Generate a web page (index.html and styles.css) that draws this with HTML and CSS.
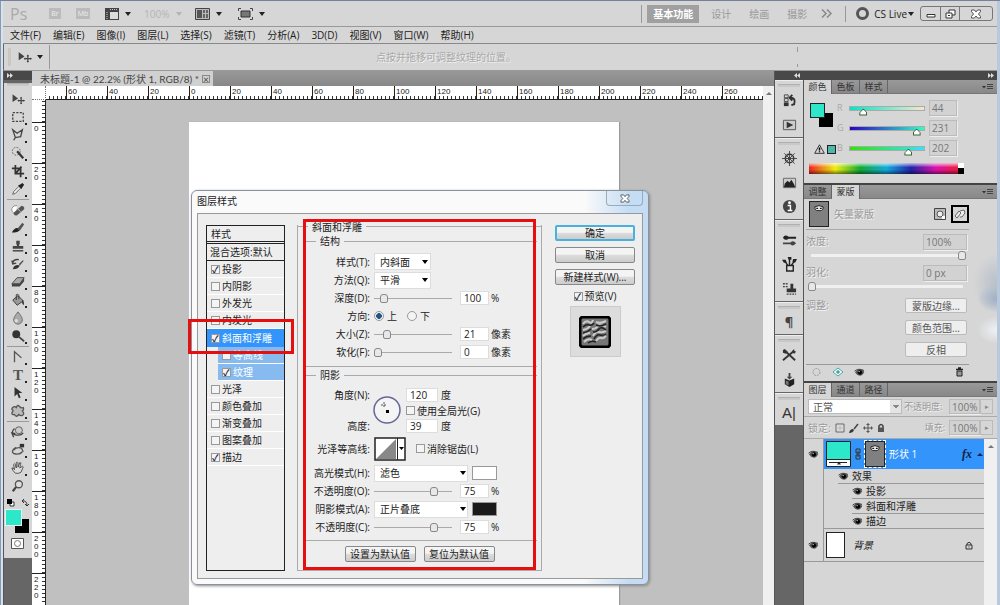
FILE: index.html
```
<!DOCTYPE html>
<html lang="zh-CN">
<head>
  <meta charset="UTF-8">
  <meta name="viewport" content="width=device-width, initial-scale=1.0">
  <title>未标题-1 - 图层样式</title>
  <link rel="stylesheet" href="styles.css">
</head>
<body>
<svg class="defs" aria-hidden="true">
  <symbol id="eye" viewBox="0 0 12 10">
    <path d="M1 5Q3 1.500 6.500 1.700Q10 2 11.300 4.500Q9.500 8.600 6.500 8.600Q3.500 8.600 1 5z" fill="#555"/>
    <circle cx="6.500" cy="5" r="2.400" fill="#000"/><circle cx="5.600" cy="4" r=".8" fill="#ddd"/>
    <path d="M.5 3.500Q5-.3 11 2.800" stroke="#333" fill="none"/>
  </symbol>
  <symbol id="move" viewBox="0 0 18 14">
    <path d="M2 1v10l7-4.500z" fill="#444"/>
    <path d="M13 5v8M9 9h8" stroke="#444" stroke-width="1.500"/>
    <path d="M11.500 6L13 4l1.500 2zM11.500 12l1.500 2 1.500-2zM10 7.500L8 9l2 1.500zM16 7.500L18 9l-2 1.500z" fill="#444"/>
  </symbol>
  <symbol id="close" viewBox="0 0 12 10">
    <path d="M1.500 1h3L6 3l1.500-2h3v1.500L8.500 5l2 2.500V9h-3L6 7 4.500 9h-3V7.500l2-2.500-2-2.500z" fill="#fff" stroke="#555"/>
  </symbol>
  <symbol id="menuicon" viewBox="0 0 12 8">
    <path d="M0 3h4L2 5.500z" fill="#333"/><path d="M5 1.500h6M5 3.500h6M5 5.500h6" stroke="#444"/>
  </symbol>
  <symbol id="facemask" viewBox="0 0 20 26">
    <path d="M5.500 5Q10 2.500 14.500 5Q15 9 11 9.500L10 8.500 9 9.500Q5 9 5.500 5z" fill="#eee" stroke="#111"/>
    <path d="M7 6h2v1.500H7zM11 6h2v1.500h-2z" fill="#111"/>
  </symbol>
</svg>

<div class="app">
  <header class="appbar">
    <span class="ps">Ps</span>
    <span class="badge">Br</span>
    <span class="badge mb">Mb</span>
    <button class="viewbtn extras" aria-label="查看额外内容">
      <svg width="14" height="12" viewBox="0 0 14 12"><path d="M0 0h14v12H0z" fill="#444"/><path d="M5 4h8v7H5z" fill="#ddd"/><path d="M5 1.500h8M2 4v7" stroke="#ccc" stroke-dasharray="1 1"/></svg>
      <i class="tri"></i>
    </button>
    <button class="viewbtn zoomlevel">100% <i class="tri"></i></button>
    <button class="viewbtn" aria-label="排列文档">
      <svg width="15" height="12" viewBox="0 0 15 12"><path d="M.5.5h14v11H.5z" fill="#bbb" stroke="#444"/><path d="M2 2h5v8H2z" fill="#555"/><path d="M8 2h2v3H8zM11 2h2v3h-2zM8 6h2v4H8zM11 6h2v4h-2z" fill="#666"/></svg>
      <i class="tri"></i>
    </button>
    <button class="viewbtn" aria-label="屏幕模式">
      <svg width="15" height="12" viewBox="0 0 15 12"><path d="M3 3h9v6H3z" fill="#777" stroke="#333"/><path d="M.5 3V.5H3M12 .5h2.500V3M.5 9v2.500H3M12 11.500h2.500V9" fill="none" stroke="#444"/></svg>
      <i class="tri"></i>
    </button>
    <nav class="workspaces">
      <button class="ws active">基本功能</button>
      <button class="ws">设计</button>
      <button class="ws">绘画</button>
      <button class="ws">摄影</button>
      <button class="more" aria-label="更多">
        <svg width="12" height="9" viewBox="0 0 12 9"><path d="M1 .5l4 4-4 4M6 .5l4 4-4 4" fill="none" stroke="#888" stroke-width="1.500"/></svg>
      </button>
    </nav>
    <button class="cslive"><i class="ring"></i>CS Live<i class="tri"></i></button>
    <div class="winbtns">
      <button aria-label="最小化"><svg width="10" height="8" viewBox="0 0 10 8"><path d="M1 4.500h8v2.500H1z" fill="#fff" stroke="#333"/></svg></button>
      <button aria-label="还原"><svg width="11" height="10" viewBox="0 0 11 10"><path d="M4 1h6v5H4z" fill="#fff" stroke="#333"/><path d="M1 4h6v5H1z" fill="#fff" stroke="#333"/><path d="M3 6.500h2" stroke="#333"/></svg></button>
      <button class="wide" aria-label="关闭"><svg width="12" height="10"><use href="#close"/></svg></button>
    </div>
  </header>

  <nav class="menubar">
    <a href="#">文件(F)</a><a href="#">编辑(E)</a><a href="#">图像(I)</a><a href="#">图层(L)</a><a href="#">选择(S)</a><a href="#">滤镜(T)</a><a href="#">分析(A)</a><a href="#">3D(D)</a><a href="#">视图(V)</a><a href="#">窗口(W)</a><a href="#">帮助(H)</a>
  </nav>

  <div class="options">
    <i class="vgrip"></i>
    <button class="tool-preset" aria-label="移动工具"><svg width="15" height="12"><use href="#move"/></svg><i class="tri"></i></button>
    <span class="hint">点按并拖移可调整纹理的位置。</span>
    <i class="endgrip"></i>
  </div>

  <div class="workspace">
    <aside class="tools">
      <div class="darkbar"><svg width="6" height="5" viewBox="0 0 6 5"><path d="M0 0l3 2.500L0 5zM3 0l3 2.500L3 5z" fill="#ddd"/></svg></div>
      <div class="toolbox">
        <i class="grip"></i>
        <button class="tool" aria-label="移动"><svg viewBox="0 0 18 14"><use href="#move"/></svg></button>
        <button class="tool sub" aria-label="选框"><svg viewBox="0 0 16 16"><path d="M2 3h12v10H2z" fill="none" stroke="#444" stroke-width="1.500" stroke-dasharray="2.500 1.500"/></svg></button>
        <button class="tool sub" aria-label="套索"><svg viewBox="0 0 16 16"><path d="M2 2l5 4 6-4-2 8-6 1zM5 11l-2 3" fill="none" stroke="#444" stroke-width="1.500"/></svg></button>
        <button class="tool sub" aria-label="快速选择"><svg viewBox="0 0 16 16"><circle cx="6" cy="6" r="4.500" fill="none" stroke="#555" stroke-dasharray="2 1.500"/><path d="M7 6l7 8" stroke="#333" stroke-width="2.500"/></svg></button>
        <button class="tool sub" aria-label="裁剪"><svg viewBox="0 0 16 16"><path d="M5 1v10h10M1 5h10v10M5 11l7-8" fill="none" stroke="#333" stroke-width="2"/></svg></button>
        <button class="tool sub" aria-label="吸管"><svg viewBox="0 0 16 16"><path d="M2 14l1-3 6-6 2 2-6 6z" fill="#eee" stroke="#555"/><path d="M8 4l2-1 3-2 2 2-2 3-1 2z" fill="#222"/></svg></button>
        <hr>
        <button class="tool sub" aria-label="修复画笔"><svg viewBox="0 0 16 16"><path d="M5 12Q0 11 1 6Q3 2 7 3" fill="#fff" stroke="#888"/><path d="M3 11L12 3q4 1 3 4L7 14q-4 1-4-3z" fill="#555"/><path d="M8 7l3 3" stroke="#ccc"/></svg></button>
        <button class="tool sub" aria-label="画笔"><svg viewBox="0 0 16 16"><path d="M1 13q3-6 7-5l2 2q-2 4-9 3z" fill="#222"/><path d="M7 9l6-7 2 2-5 7z" fill="#555"/></svg></button>
        <button class="tool sub" aria-label="图章"><svg viewBox="0 0 16 16"><path d="M6 2h4v3L9 8h5v3H2V8h5L6 5z" fill="#444"/><path d="M2 13.500h12" stroke="#333" stroke-width="1.500"/></svg></button>
        <button class="tool sub" aria-label="历史记录画笔"><svg viewBox="0 0 16 16"><path d="M2 14q1-5 6-5l2 1q-2 4-8 4z" fill="#333"/><path d="M9 8l5-5v2l-4 5z" fill="#555"/><path d="M2 7q1-5 7-4M1 4l1 4 4-1" fill="none" stroke="#444" stroke-width="1.500"/></svg></button>
        <button class="tool sub" aria-label="橡皮擦"><svg viewBox="0 0 16 16"><path d="M1 10l6-7h8l-5 7z" fill="#aaa" stroke="#444"/><path d="M1 10h9l5-7v4l-5 6H1z" fill="#444"/></svg></button>
        <button class="tool sub" aria-label="油漆桶"><svg viewBox="0 0 16 16"><path d="M2 8l6-5 6 6-7 5z" fill="#999" stroke="#333"/><path d="M6 8V2q2-2 3 1v4" fill="none" stroke="#333"/><path d="M13 8q3 3 1 6-2-2-1-6z" fill="#222"/></svg></button>
        <button class="tool sub" aria-label="模糊"><svg viewBox="0 0 16 16"><path d="M8 1q5 6 5 9a5 5 0 0 1-10 0Q3 7 8 1z" fill="#aaa" stroke="#666"/><circle cx="6" cy="11" r="2" fill="#ddd"/></svg></button>
        <button class="tool sub" aria-label="减淡"><svg viewBox="0 0 16 16"><circle cx="6" cy="6" r="4.500" fill="#333"/><path d="M9 9l6 5" stroke="#444" stroke-width="2"/></svg></button>
        <hr>
        <button class="tool sub" aria-label="钢笔"><svg viewBox="0 0 16 16"><path d="M4 14V2l8 7" fill="none" stroke="#555" stroke-width="1.500"/></svg></button>
        <button class="tool sub type" aria-label="文字">T</button>
        <button class="tool sub" aria-label="路径选择"><svg viewBox="0 0 16 16"><path d="M4 1v11l3-3 2 5 2-1-2-5h4z" fill="#333"/></svg></button>
        <button class="tool sub" aria-label="自定形状"><svg viewBox="0 0 16 16"><path d="M2 4q2-2 4 0 1-4 4-1 1 2 4 1 1 3-1 4 3 3 0 5-2 1-4-1-3 4-5 0-3 1-3-2 2-2 1-3-2-1 0-3z" fill="#bbb" stroke="#555" stroke-width="1.500"/></svg></button>
        <hr>
        <button class="tool sub" aria-label="3D 旋转"><svg viewBox="0 0 16 16"><circle cx="9" cy="6" r="4" fill="#ccc" stroke="#555"/><path d="M4 4q-5 5 0 7 7 2 10-2M3 14l-2-5 4 1" fill="none" stroke="#444" stroke-width="1.500"/></svg></button>
        <button class="tool sub" aria-label="3D 相机"><svg viewBox="0 0 16 16"><path d="M6 5q-7 4-3 7 7 2 10-2M3 8q4-4 9-2l2 4" fill="none" stroke="#555" stroke-width="1.500"/><path d="M10 1h5v4h-5z" fill="#333"/></svg></button>
        <button class="tool sub" aria-label="抓手"><svg viewBox="0 0 16 16"><path d="M5 14Q1 10 1 8q2-1 3 2L3 4q1-2 2 0l1 4V2q1-2 2 0v5l2-5q2-1 1 2l-1 4 3-2q2 0 0 3-1 5-4 5z" fill="#ddd" stroke="#444"/></svg></button>
        <button class="tool" aria-label="缩放"><svg viewBox="0 0 16 16"><circle cx="9" cy="6" r="4" fill="#ddd" stroke="#555" stroke-width="1.500"/><path d="M6 9l-4 5" stroke="#444" stroke-width="2.500"/></svg></button>
        <div class="swaprow">
          <svg width="8" height="8" viewBox="0 0 8 8"><path d="M3 3h4v4H3z" fill="#fff" stroke="#333"/><path d="M0 0h5v5H0z" fill="#000"/></svg>
          <svg width="8" height="8" viewBox="0 0 8 8"><path d="M1 2q5-1 5 5M3 0L1 2l2 2M4 5l2 2 2-2" fill="none" stroke="#333"/></svg>
        </div>
        <div class="fgbg"><button class="fg" aria-label="前景色"></button><i class="bg"></i></div>
        <button class="quickmask" aria-label="快速蒙版"><svg width="13" height="11" viewBox="0 0 13 11"><path d="M.5.5h12v10H.5z" fill="#fff" stroke="#555"/><circle cx="6.500" cy="5.500" r="3" fill="#fff" stroke="#777"/></svg></button>
      </div>
    </aside>

    <main class="document">
      <div class="doctabs"><span class="doctab">未标题-1 @ 22.2% (形状 1, RGB/8) * <button aria-label="关闭文档">×</button></span></div>
      <div class="docgrid">
        <div class="corner"></div>
        <div class="ruler-h"><span></span><span>60</span><span>40</span><span>20</span><span>0</span><span>20</span><span>40</span><span>60</span><span>80</span><span>100</span><span>120</span><span>140</span><span>160</span><span>180</span><span>200</span><span>220</span><span>240</span><span>260</span></div>
        <div class="scroll"><i class="uptri"></i></div>
        <div class="ruler-v"><span></span><span>0</span><span>20</span><span>40</span><span>60</span><span>80</span><span>100</span><span>120</span><span>140</span><span>160</span><span>180</span><span>200</span><span>220</span></div>
        <div class="canvas"><div class="sheet"></div></div>
      </div>
    </main>

    <div class="right">
      <div class="darkbar docks">
        <svg width="6" height="5" viewBox="0 0 6 5"><path d="M3 0L0 2.500 3 5zM6 0L3 2.500 6 5z" fill="#ddd"/></svg>
        <svg width="6" height="5" viewBox="0 0 6 5"><path d="M0 0l3 2.500L0 5zM3 0l3 2.500L3 5z" fill="#ddd"/></svg>
      </div>
      <div class="rightcols">
        <aside class="dock">
          <div class="group">
            <i class="grip"></i>
            <button aria-label="历史记录"><svg viewBox="0 0 16 16"><path d="M2.500 2h4v3h-4zM2.500 6h4v3h-4z" fill="#ddd" stroke="#444"/><path d="M2 10h5v4H2z" fill="#333"/><path d="M9 5q6 0 4 7l-3 1M11 2L8 5l3 3" fill="none" stroke="#333" stroke-width="2"/></svg></button>
            <button aria-label="动作"><svg viewBox="0 0 16 16"><path d="M1.500 3.500h13v10h-13z" fill="#ccc" stroke="#555"/><path d="M5 5v7l7-3.500z" fill="#333"/></svg></button>
          </div>
          <div class="group">
            <i class="grip"></i>
            <button aria-label="导航器"><svg viewBox="0 0 16 16"><circle cx="8" cy="8" r="4.500" fill="none" stroke="#333" stroke-width="1.500"/><circle cx="8" cy="8" r="1.800" fill="#333"/><path d="M8 0v16M0 8h16M2.500 2.500l11 11M13.500 2.500l-11 11" stroke="#444"/></svg></button>
            <button aria-label="直方图"><svg viewBox="0 0 16 16"><path d="M1.500 3.500h13v10h-13z" fill="#ccc" stroke="#666"/><path d="M2 13l1-4 3-3 2 2 2-3 3 5 1 3z" fill="#222"/></svg></button>
            <button aria-label="信息"><svg viewBox="0 0 16 16"><circle cx="8" cy="8" r="7" fill="#444"/><circle cx="8" cy="4" r="1.500" fill="#fff"/><path d="M6 7h3v5M6 12.300h5" stroke="#fff" stroke-width="1.500" fill="none"/></svg></button>
          </div>
          <div class="group">
            <i class="grip"></i>
            <button aria-label="画笔"><svg viewBox="0 0 16 16"><path d="M1 5q2-4 6-1h8v2H7q-4 3-6-1z" fill="#222"/><path d="M1 10h8q3-3 6 1-3 4-6 1H1z" fill="#444"/></svg></button>
            <button aria-label="画笔预设"><svg viewBox="0 0 16 16"><path d="M5 9h7v6H5z" fill="#ddd" stroke="#222" stroke-width="1.500"/><path d="M6 9L3 4M8 9V2M10 9l4-6" stroke="#222" stroke-width="1.500"/><path d="M0 3l4 0 1 3-3 0zM6 0h4v3H7zM11 5l1-3 4 0-2 4z" fill="#222"/></svg></button>
            <button aria-label="仿制源"><svg viewBox="0 0 16 16"><path d="M9 3h3v5h3v4H5V8h4z" fill="#333"/><path d="M5 14h10M1 3h6M1 6h5" stroke="#444" stroke-width="1.500" stroke-dasharray="2 1"/></svg></button>
          </div>
          <div class="group single">
            <i class="grip"></i>
            <button class="glyph" aria-label="段落">¶</button>
          </div>
          <div class="group">
            <i class="grip"></i>
            <button aria-label="工具预设"><svg viewBox="0 0 16 16"><path d="M1 13L13 3M3 3l11 10" stroke="#333" stroke-width="2"/><path d="M1 2l2-1 3 3-2 2-3-1zM11 3l2-2v2l2 1-2 2-2-1z" fill="#333"/></svg></button>
            <button aria-label="3D"><svg viewBox="0 0 16 16"><path d="M3 7l5 2 5-2v6l-5 3-5-3z" fill="#222"/><path d="M7 1h2v4h2L8 8 5 5h2z" fill="#444"/><path d="M4 9l3 1v4l-3-1z" fill="#777"/></svg></button>
          </div>
          <div class="group single">
            <i class="grip"></i>
            <button class="glyph char" aria-label="字符">A|</button>
          </div>
        </aside>

        <div class="panels">
          <section class="panel color">
            <div class="tabs"><button class="on">颜色</button><button>色板</button><button>样式</button><svg width="12" height="8"><use href="#menuicon"/></svg></div>
            <div class="colorbody">
              <div class="swatchcol">
                <div class="fgbg"><button class="fg" aria-label="前景色"></button><i class="bg"></i></div>
                <div class="warn">
                  <svg width="11" height="10" viewBox="0 0 11 10"><path d="M5.500.8L10.300 9.300H.7z" fill="#ddd" stroke="#333"/><path d="M5.500 3.500v3M5.500 7.300v1" stroke="#000" stroke-width="1.500"/></svg>
                  <i></i>
                </div>
              </div>
              <div class="channels">
                <label for="cr">R</label><div class="ch r"><i style="left:18%"></i></div><input id="cr" value="44">
                <label for="cg">G</label><div class="ch g"><i style="left:90%"></i></div><input id="cg" value="231">
                <label for="cb">B</label><div class="ch b"><i style="left:79%"></i></div><input id="cb" value="202">
              </div>
            </div>
            <div class="spectrum"><i></i></div>
          </section>

          <section class="panel masks">
            <div class="tabs"><button>调整</button><button class="on">蒙版</button><svg width="12" height="8"><use href="#menuicon"/></svg></div>
            <div class="maskhead">
              <svg class="maskthumb" width="20" height="26"><use href="#facemask"/></svg>
              <span class="emboss">矢量蒙版</span>
              <button aria-label="像素蒙版"><svg width="12" height="12" viewBox="0 0 12 12"><path d="M.5.5h11v11H.5z" fill="#bbb" stroke="#444"/><circle cx="6" cy="6" r="3" fill="#eee" stroke="#555"/><path d="M8 8h3v3H8z" fill="#fff"/></svg></button>
              <button class="boxed" aria-label="矢量蒙版"><svg width="12" height="12" viewBox="0 0 12 12"><path d="M1 8l4-5 2 2-4 5zM6 3l4-1 1 3-3 4-2 0" fill="#eee" stroke="#666"/></svg></button>
            </div>
            <div class="maskrow"><label class="emboss" for="dens">浓度:</label><input id="dens" value="100%"></div>
            <input class="bar" type="range" value="100" aria-label="浓度">
            <div class="maskrow"><label class="emboss" for="feat">羽化:</label><input id="feat" value="0 px"></div>
            <input class="bar" type="range" value="0" aria-label="羽化">
            <div class="refine">
              <span class="emboss">调整:</span>
              <div><button>蒙版边缘...</button><button>颜色范围...</button><button>反相</button></div>
            </div>
            <div class="maskfoot">
              <svg width="11" height="10" viewBox="0 0 11 10"><circle cx="5.500" cy="5" r="3.500" fill="none" stroke="#999" stroke-dasharray="2 1"/></svg>
              <svg width="12" height="10" viewBox="0 0 12 10"><path d="M1 5l5-4 5 4-5 4z" fill="#eff" stroke="#4aa"/><path d="M6 3v4M4 5h4" stroke="#377"/></svg>
              <svg width="11" height="9"><use href="#eye"/></svg>
              <svg class="trash" width="9" height="10" viewBox="0 0 9 10"><path d="M1 2.500h7M3 1h3" stroke="#222" stroke-width="1.500"/><path d="M2 4h5v5H2z" fill="#999" stroke="#222"/></svg>
            </div>
          </section>

          <section class="panel layers">
            <div class="tabs"><button class="on">图层</button><button>通道</button><button>路径</button><svg width="12" height="8"><use href="#menuicon"/></svg></div>
            <div class="layeropts">
              <select aria-label="混合模式"><option>正常</option></select>
              <label class="emboss" for="opac">不透明度:</label><input id="opac" value="100%"><button aria-label="不透明度滑块">▸</button>
            </div>
            <div class="layeropts locks">
              <span class="emboss">锁定:</span>
              <svg width="10" height="10" viewBox="0 0 10 10"><path d="M1 1h8v8H1z" fill="#ddd" stroke="#666"/><path d="M5 1v8M1 5h8" stroke="#bbb"/></svg>
              <svg width="10" height="10" viewBox="0 0 10 10"><path d="M0 10q1-4 4-4l1 1q-1 3-5 3z" fill="#333"/><path d="M5 6l4-5" stroke="#444" stroke-width="1.500"/></svg>
              <svg width="10" height="10" viewBox="0 0 10 10"><path d="M5 0v10M0 5h10M3.500 1.500h3M3.500 8.500h3M1.500 3.500v3M8.500 3.500v3" stroke="#555"/></svg>
              <svg width="8" height="10" viewBox="0 0 8 10"><path d="M2 5V3q2-3 4 0v2" fill="none" stroke="#444" stroke-width="1.500"/><path d="M1 4.500h6V9H1z" fill="#555"/></svg>
              <label class="emboss fill" for="fillv">填充:</label><input id="fillv" value="100%"><button aria-label="填充滑块">▸</button>
            </div>
            <div class="layerwrap">
              <div class="layerlist">
                <div class="layer selected">
                  <button class="vis boxed" aria-label="可见"><svg width="11" height="9"><use href="#eye"/></svg></button>
                  <div class="layermain">
                    <svg width="25" height="26" viewBox="0 0 25 26"><path d="M.5.5h24v25H.5z" fill="#fff" stroke="#222"/><path d="M1 1h23v17H1z" fill="#2ce7ca"/><path d="M1 18.500h23M3 21.500h18" stroke="#222"/><path d="M11 23.500l2-3 2 3z" fill="#222"/></svg>
                    <svg width="6" height="12" viewBox="0 0 6 12"><path d="M1 1h4v4H1zM1 7h4v4H1zM3 3v6" fill="none" stroke="#333"/></svg>
                    <svg class="vthumb" width="20" height="26"><use href="#facemask"/></svg>
                    <span>形状 1</span>
                    <em class="fx">fx</em><i class="uptri"></i>
                  </div>
                </div>
                <div class="effects">
                  <div class="fxrow top"><svg width="11" height="9"><use href="#eye"/></svg>效果</div>
                  <div class="fxrow"><svg width="11" height="9"><use href="#eye"/></svg>投影</div>
                  <div class="fxrow"><svg width="11" height="9"><use href="#eye"/></svg>斜面和浮雕</div>
                  <div class="fxrow last"><svg width="11" height="9"><use href="#eye"/></svg>描边</div>
                </div>
                <div class="layer back">
                  <button class="vis boxed" aria-label="可见"><svg width="11" height="9"><use href="#eye"/></svg></button>
                  <div class="layermain">
                    <i class="bgthumb"></i>
                    <em class="bgname">背景</em>
                    <svg class="lock" width="8" height="9" viewBox="0 0 8 9"><path d="M2 4V2.500q2-2.500 4 0V4M1 4h6v4H1zM4 5.500v1" fill="none" stroke="#333"/></svg>
                  </div>
                </div>
              </div>
              <div class="scroll"><i class="uptri"></i></div>
            </div>
          </section>
        </div>
      </div>
    </div>
  </div>

  <div class="dialog" role="dialog" aria-label="图层样式">
    <div class="dlgtitle"><span>图层样式</span><button aria-label="关闭"><svg width="12" height="9"><use href="#close"/></svg></button></div>
    <div class="dlgbody">
      <div class="stylelist">
        <div class="listhead">样式</div>
        <div class="listblend">混合选项:默认</div>
        <label><input type="checkbox" checked>投影</label>
        <label><input type="checkbox">内阴影</label>
        <label><input type="checkbox">外发光</label>
        <label><input type="checkbox">内发光</label>
        <label class="current"><input type="checkbox" checked>斜面和浮雕</label>
        <label class="child"><input type="checkbox">等高线</label>
        <label class="child"><input type="checkbox" checked>纹理</label>
        <label><input type="checkbox">光泽</label>
        <label><input type="checkbox">颜色叠加</label>
        <label><input type="checkbox">渐变叠加</label>
        <label><input type="checkbox">图案叠加</label>
        <label><input type="checkbox" checked>描边</label>
      </div>

      <div class="bevel">
        <div class="legend outer">斜面和浮雕</div>
        <div class="section structure">
          <div class="legend">结构</div>
          <div class="row tall"><label for="st">样式(T):</label><select id="st"><option>内斜面</option></select></div>
          <div class="row"><label for="me">方法(Q):</label><select id="me"><option>平滑</option></select></div>
          <div class="row"><label for="de">深度(D):</label><input type="range" value="9" aria-label="深度"><input class="num" id="de" value="100"><span>%</span></div>
          <div class="row radios"><span class="lab">方向:</span><label><input type="radio" name="dir" checked>上</label><label><input type="radio" name="dir">下</label></div>
          <div class="row"><label for="si">大小(Z):</label><input type="range" value="13" aria-label="大小"><input class="num" id="si" value="21"><span>像素</span></div>
          <div class="row"><label for="so">软化(F):</label><input type="range" value="0" aria-label="软化"><input class="num" id="so" value="0"><span>像素</span></div>
        </div>
        <div class="section shading">
          <div class="legend">阴影</div>
          <div class="angle">
            <div class="anglelabels"><label for="an">角度(N):</label><label for="al">高度:</label></div>
            <svg width="28" height="28" viewBox="0 0 28 28"><circle cx="14" cy="14" r="13" fill="#f4f4f4" stroke="#669" stroke-width="1.500"/><path d="M11 6v6M8 9h6" stroke="#555" stroke-dasharray="2 1"/><path d="M13 14h3v3h-3z" fill="#000"/></svg>
            <div class="anglevals">
              <div><input class="num" id="an" value="120"><span>度</span></div>
              <label><input type="checkbox">使用全局光(G)</label>
              <div><input class="num" id="al" value="39"><span>度</span></div>
            </div>
          </div>
          <div class="row contour"><span class="lab">光泽等高线:</span>
            <button class="curve" aria-label="光泽等高线"><svg width="32" height="24" viewBox="0 0 32 24"><path d="M1 1h30v22H1z" fill="#fff" stroke="#222" stroke-width="1.500"/><path d="M2 22L22 2v20z" fill="#888"/><path d="M23.500 1v22" stroke="#222"/><path d="M25 10h5l-2.500 3z" fill="#000"/></svg></button>
            <label class="check"><input type="checkbox">消除锯齿(L)</label></div>
          <div class="row blend"><label for="hm">高光模式(H):</label><select id="hm"><option>滤色</option></select><button class="swatch" aria-label="高光颜色"></button></div>
          <div class="row"><label for="ho">不透明度(O):</label><input type="range" value="80" aria-label="高光不透明度"><input class="num" id="ho" value="75"><span>%</span></div>
          <div class="row blend"><label for="sm">阴影模式(A):</label><select id="sm"><option>正片叠底</option></select><button class="swatch black" aria-label="阴影颜色"></button></div>
          <div class="row"><label for="sh">不透明度(C):</label><input type="range" value="80" aria-label="阴影不透明度"><input class="num" id="sh" value="75"><span>%</span></div>
        </div>
        <div class="defaults"><button class="btn">设置为默认值</button><button class="btn">复位为默认值</button></div>
      </div>

      <div class="actions">
        <button class="btn primary">确定</button>
        <button class="btn">取消</button>
        <button class="btn">新建样式(W)...</button>
        <label class="check"><input type="checkbox" checked>预览(V)</label>
        <div class="preview">
          <svg width="32" height="32" viewBox="0 0 32 32">
            <path d="M3 1h26l2 2v26l-2 2H3l-2-2V3z" fill="#777" stroke="#000" stroke-width="3"/>
            <path d="M4 8q3-4 6-2t4-2M17 6q4 2 10-1M4 14q5-1 7-4M13 13q4 0 6-3t8 1M4 20q3-3 7-3M14 20q3-5 6-4t7-1M5 26q4-4 8-2M17 25q3-4 5-3t5-2" fill="none" stroke="#ccc" stroke-width="2"/>
            <path d="M4 11q3-3 6-2t5-2M17 9q4 2 10-1M4 17q5-1 8-4M14 16q4 0 6-3t7 1M4 23q3-3 8-3M15 23q3-5 6-4t6-1M9 27q4-3 8-1" fill="none" stroke="#222" stroke-width="1.500"/>
          </svg>
        </div>
      </div>
    </div>
  </div>

  <div class="mark mark-list"></div>
  <div class="mark mark-form"></div>
</div>
</body>
</html>
```
FILE: styles.css
```
* {
  box-sizing: border-box;
}
body {
  margin: 0;
  font-family: "Open Sans", "Noto Sans CJK SC", sans-serif;
  font-size: 10px;
  line-height: 14px;
  color: #222;
  background: #d6d6d6;
}
button, input, select {
  font: inherit;
  color: inherit;
  margin: 0;
  padding: 0;
  border: 0;
  background: none;
}
svg {
  flex: none;
  display: block;
}
.defs {
  position: absolute;
  width: 0;
  height: 0;
}
.app {
  position: relative;
  display: flex;
  flex-direction: column;
  height: 100vh;
  overflow: hidden;
  padding: 0 3px;
  border-top: 1px solid #77809a;
  background: linear-gradient(to right, #8b98ad 1px, #d3e2ee 1px, #d3e2ee 3px, #d6d6d6 3px, #d6d6d6 calc(100% - 3px), #b9c9dd calc(100% - 3px));
}
.tri {
  width: 0;
  height: 0;
  border: 3px solid transparent;
  border-top: 4px solid #222;
  border-bottom: 0;
}
.uptri {
  width: 0;
  height: 0;
  border: 3px solid transparent;
  border-bottom: 3px solid #777;
  border-top: 0;
}
.emboss {
  color: #999;
  text-shadow: 1px 1px 0 #f4f4f4;
}

/* application bar */
.appbar {
  display: flex;
  align-items: center;
  height: 26px;
  flex: none;
  padding: 0 4px 0 7px;
  border-bottom: 1px solid #999;
}
.ps {
  width: 39px;
  font-size: 16px;
  color: #aaa;
}
.badge {
  width: 12px;
  height: 11px;
  margin-right: 15px;
  font-size: 7px;
  line-height: 11px;
  text-align: center;
  color: #eee;
  background: #bbb;
}
.badge.mb {
  width: 14px;
}
.viewbtn {
  display: flex;
  align-items: center;
  gap: 6px;
  margin-right: 16px;
}
.viewbtn.extras {
  margin-right: 13px;
}
.zoomlevel {
  gap: 7px;
  color: #b4b4b4;
  margin-right: 13px;
}
.zoomlevel .tri {
  border-top-color: #b4b4b4;
}
.workspaces {
  display: flex;
  align-items: center;
  margin-left: auto;
  padding-left: 5px;
  border-left: 1px solid #999;
}
.ws {
  height: 18px;
  margin-right: 18px;
  color: #999;
}
.ws.active {
  width: 52px;
  margin-right: 12px;
  font-weight: bold;
  color: #fff;
  background: #a0a0a0;
}
.more {
  margin: 0 12px 0 -4px;
}
.cslive {
  display: flex;
  align-items: center;
  gap: 1px;
  height: 16px;
  padding: 0 6px 0 10px;
  border-left: 1px solid #999;
}
.ring {
  width: 13px;
  height: 13px;
  margin-right: 4px;
  border: 3px solid #555;
  border-radius: 50%;
}
.winbtns {
  display: flex;
  height: 15px;
  border: 1px solid #777;
  border-radius: 3px;
}
.winbtns button {
  display: flex;
  align-items: center;
  justify-content: center;
  width: 19px;
}
.winbtns button + button {
  border-left: 1px solid #777;
}
.winbtns .wide {
  width: 33px;
}
.menubar {
  display: flex;
  gap: 12px;
  flex: none;
  height: 17px;
  padding: 1px 7px;
  border-bottom: 1px solid #888;
}
.menubar a {
  color: #222;
  text-decoration: none;
  white-space: nowrap;
}
.options {
  display: flex;
  align-items: center;
  flex: none;
  height: 27px;
  padding-left: 4px;
  border-left: 1px solid #666;
  border-bottom: 1px solid #999;
}
.vgrip {
  width: 3px;
  height: 18px;
  background: #c8c8c0;
}
.tool-preset {
  display: flex;
  align-items: center;
  gap: 5px;
  width: 39px;
  height: 24px;
  padding-left: 6px;
  border-right: 1px solid #999;
}
.hint {
  flex: 1;
  padding-left: 326px;
  color: #aaa;
  text-shadow: 1px 1px 0 #f0f0f0;
}
.endgrip {
  width: 1px;
  height: 20px;
  margin-right: 199px;
  background: linear-gradient(#999 25%, transparent 25%, transparent 85%, #999 85%);
}

/* workspace */
.workspace {
  display: flex;
  flex: 1;
  min-height: 0;
}
.darkbar {
  display: flex;
  align-items: center;
  flex: none;
  height: 9px;
  padding-left: 3px;
  background: #484848;
}
.grip {
  display: block;
  width: 22px;
  height: 3px;
  margin: 3px auto;
  background: #c8c8c8;
  border-top: 1px solid #b0b0b0;
}
.tools {
  flex: none;
  width: 29px;
  background: #666;
  border-left: 1px solid #555;
}
.toolbox {
  padding-bottom: 9px;
  background: #d6d6d6;
}
.tools .grip {
  margin-bottom: 4px;
}
.tool {
  position: relative;
  display: flex;
  align-items: center;
  justify-content: center;
  width: 28px;
  height: 18px;
}
.tool svg {
  width: 14px;
  height: 14px;
}
.tool.sub::after {
  content: "";
  position: absolute;
  right: 5px;
  bottom: 1px;
  border: 1px solid #222;
}
.tool.type {
  font: bold 15px "Liberation Serif", serif;
  color: #555;
}
.tools hr {
  height: 1px;
  margin: 1px 3px;
  border: 0;
  background: #999;
}
.swaprow {
  display: flex;
  justify-content: space-between;
  padding: 4px 3px 0;
}
.fgbg {
  position: relative;
  width: 23px;
  height: 23px;
  margin: 3px 2px 0;
}
.fgbg .fg {
  position: absolute;
  z-index: 1;
  width: 15px;
  height: 15px;
  background: #2ce7ca;
  outline: 1px solid #eee;
}
.fgbg .bg {
  position: absolute;
  right: 0;
  bottom: 0;
  width: 14px;
  height: 14px;
  background: #000;
}
.quickmask {
  display: block;
  margin: 5px 0 0 7px;
}

/* document */
.document {
  display: flex;
  flex-direction: column;
  flex: 1;
  min-width: 0;
}
.doctabs {
  flex: none;
  height: 15px;
  background: linear-gradient(#989898, #888);
}
.doctab {
  display: inline-flex;
  align-items: center;
  gap: 3px;
  height: 15px;
  padding: 0 3px 0 8px;
  font-family: "Noto Sans", Lato, "Noto Sans CJK SC", sans-serif;
  font-family: Lato, "Noto Sans CJK SC", sans-serif;
  white-space: nowrap;
  color: #444;
  background: #d0d0d0;
}
.doctab button {
  width: 8px;
  height: 8px;
  border: 1px solid #888;
  line-height: 6px;
}
.docgrid {
  display: grid;
  grid-template-columns: 14px 1fr 11px;
  grid-template-rows: 14px 1fr;
  flex: 1;
  min-height: 0;
}
.corner {
  background: #fff;
  border: 1px dotted #777;
  border-left: 0;
  border-top: 0;
}
.ruler-h, .ruler-v {
  display: flex;
  overflow: hidden;
  font-family: "Liberation Sans", sans-serif;
  font-size: 8px;
  background: #fff;
}
.ruler-h {
  border-bottom: 1px solid #222;
}
.ruler-h span {
  flex: none;
  width: 41px;
  height: 13px;
  padding-left: 1px;
  line-height: 11px;
  border-left: 1px solid #222;
  background: repeating-linear-gradient(to right, #333 0 1px, transparent 1px 10%) 3px bottom / 100% 3px no-repeat;
}
.ruler-h span:first-child {
  margin-left: -21px;
}
.ruler-v {
  flex-direction: column;
  border-right: 1px solid #222;
}
.ruler-v span {
  flex: none;
  height: 41px;
  width: 13px;
  padding: 2px 7px 0 2px;
  line-height: 8px;
  word-break: break-all;
  border-top: 1px solid #222;
  background: repeating-linear-gradient(#333 0 1px, transparent 1px 10%) right 3px / 3px 100% no-repeat;
}
.ruler-v span:first-child {
  margin-top: -19px;
}
.docgrid > .scroll {
  grid-row: 1 / 3;
  grid-column: 3;
}
.scroll {
  display: flex;
  justify-content: center;
  padding-top: 6px;
  background: #f0f0f0;
}
.canvas {
  overflow: hidden;
  background: #c0c0c0;
}
.sheet {
  width: 430px;
  height: 100%;
  margin: 22px 0 0 143px;
  background: #fff;
  box-shadow: 1px 0 1px #999;
}

/* right side */
.right {
  display: flex;
  flex-direction: column;
  flex: none;
  width: 223px;
  border-left: 1px solid #555;
}
.docks {
  justify-content: space-between;
  padding: 0 3px 0 19px;
}
.rightcols {
  display: flex;
  flex: 1;
  min-height: 0;
}
.dock {
  flex: none;
  width: 28px;
  background: #666;
}
.group {
  padding-bottom: 1px;
  background: #d6d6d6;
  border-bottom: 1px solid #666;
  border-top: 1px solid #eee;
}
.dock .grip {
  margin: 3px auto 1px;
}
.dock button {
  display: flex;
  align-items: center;
  justify-content: center;
  width: 28px;
  height: 24px;
}
.dock svg {
  width: 15px;
  height: 15px;
}
.group.single button {
  height: 23px;
}
.dock .glyph {
  font-size: 13px;
  font-weight: bold;
  color: #444;
}
.dock .char {
  font: 15px "Liberation Sans", sans-serif;
  color: #333;
}
.panels {
  display: flex;
  flex-direction: column;
  flex: 1;
  min-width: 0;
  border-left: 1px solid #555;
}
.panel {
  background: #d6d6d6;
}
.panel + .panel {
  border-top: 2px solid #444;
}
.tabs {
  display: flex;
  align-items: center;
  flex: none;
  height: 14px;
  padding-right: 3px;
  background: linear-gradient(#999, #888);
  border-bottom: 1px solid #777;
}
.tabs button {
  width: 28px;
  height: 13px;
  font-size: 9px;
  line-height: 13px;
  color: #333;
  border-right: 1px solid #666;
}
.tabs .on {
  height: 14px;
  background: #d6d6d6;
}
.tabs svg {
  margin-left: auto;
}
.color {
  height: 103px;
}
.colorbody {
  display: flex;
  padding: 6px 0 0 6px;
}
.swatchcol {
  width: 27px;
}
.colorbody .fgbg {
  height: 24px;
  margin: 3px 0 0;
}
.colorbody .fg {
  border: 1px solid #222;
  outline: 0;
}
.warn {
  display: flex;
  align-items: center;
  gap: 2px;
  margin: 17px 0 0 4px;
}
.warn i {
  flex: none;
  width: 9px;
  height: 9px;
  background: #4cb8a8;
  border: 1px solid #222;
}
.channels {
  display: grid;
  grid-template-columns: 8px 76px 28px;
  column-gap: 4px;
  row-gap: 4px;
  align-items: center;
}
.channels label {
  font-size: 9px;
  color: #aaa;
}
.channels input, .maskrow input, .layeropts input {
  height: 16px;
  min-width: 0;
  padding-left: 2px;
  color: #777;
  background: #d2d2d2;
  border: 1px solid #bbb;
  box-shadow: 1px 1px 0 #eee;
}
.ch {
  position: relative;
  height: 5px;
  border: 1px solid #aaa;
}
/* slider pointer, a light house shape on a green one */
.ch i {
  position: absolute;
  top: 2px;
  width: 8px;
  height: 7px;
  margin-left: -4px;
  background: #363;
  clip-path: polygon(50% 0, 100% 60%, 100% 100%, 0 100%, 0 60%);
}
.ch i::after {
  content: "";
  position: absolute;
  inset: 1px;
  background: #fff;
  clip-path: polygon(50% 0, 100% 60%, 100% 100%, 0 100%, 0 60%);
}
.ch.r { background: linear-gradient(to right, #00e7ca, #f5e7ca); }
.ch.g { background: linear-gradient(to right, #2c00ca, #2cffca); }
.ch.b { background: linear-gradient(to right, #2ce700, #2ce7ff); }
.spectrum {
  display: flex;
  justify-content: flex-end;
  width: 155px;
  height: 11px;
  margin: 7px 0 0 5px;
  background: linear-gradient(rgba(255,255,255,.7), transparent 40%, transparent 60%, rgba(0,0,0,.5)), linear-gradient(to right, #e22, #ee1 17%, #1a3 33%, #1ad 50%, #22a 66%, #d1a 82%, #e22);
}
.spectrum i {
  width: 6px;
  background: linear-gradient(#fff 50%, #000 50%);
}
.masks {
  height: 198px;
  background:
    radial-gradient(20px 14px at 100% 58%, #9fb0c6, transparent),
    radial-gradient(24px 30px at 100% 50%, #b9c0ca, transparent),
    radial-gradient(20px 14px at 100% 74%, #eef1f5, transparent) #d6d6d6;
}
.maskhead {
  display: flex;
  align-items: center;
  gap: 5px;
  width: 163px;
  height: 31px;
  margin-left: 2px;
  padding-left: 3px;
  border-bottom: 1px solid #aaa;
}
.maskthumb, .vthumb {
  background: #808080;
  border: 1px solid #222;
}
.maskhead span {
  flex: 1;
}
.boxed {
  display: flex;
  align-items: center;
  justify-content: center;
}
.maskhead .boxed {
  width: 18px;
  height: 18px;
  border: 2px solid #000;
}
.maskrow {
  display: flex;
  justify-content: space-between;
  width: 161px;
  margin: 4px 0 0 2px;
}
.maskrow input {
  width: 44px;
}
input[type=range] {
  appearance: none;
  width: 78px;
  height: 12px;
  background: linear-gradient(#aaa, #aaa) center / 100% 1px no-repeat;
}
input[type=range]::-webkit-slider-thumb {
  appearance: none;
  width: 8px;
  height: 9px;
  background: #e8e8e8;
  border: 1px solid #888;
  border-radius: 3px 3px 2px 2px;
}
input[type=range].bar {
  display: block;
  width: 158px;
  height: 11px;
  margin-left: 4px;
  background: linear-gradient(#f0f0f0, #f0f0f0) center / 152px 3px no-repeat;
}
.refine {
  display: flex;
  justify-content: space-between;
  width: 161px;
  margin: 4px 0 0 2px;
  padding-top: 2px;
}
.refine div {
  display: flex;
  flex-direction: column;
  gap: 7px;
}
.refine button {
  width: 62px;
  height: 15px;
  color: #555;
  background: #eee;
  border: 1px solid #bbb;
  border-radius: 2px;
}
.maskfoot {
  display: flex;
  align-items: center;
  gap: 10px;
  width: 163px;
  height: 15px;
  margin: 7px 0 0 2px;
  padding: 0 5px;
  border-top: 1px solid #999;
}
.maskfoot .trash {
  margin-left: auto;
}

/* layers */
.layers {
  display: flex;
  flex-direction: column;
  flex: 1;
  min-height: 0;
}
.layeropts {
  display: flex;
  align-items: center;
  flex: none;
  height: 20px;
  padding: 0 4px;
  white-space: nowrap;
  border-bottom: 1px solid #aaa;
}
.layeropts select {
  appearance: none;
  flex: none;
  width: 94px;
  height: 15px;
  padding-left: 4px;
  margin-right: 2px;
  color: #555;
  background:
    linear-gradient(to bottom left, transparent 50%, #888 50%) 88px 5px / 3px 3px no-repeat,
    linear-gradient(to bottom right, transparent 50%, #888 50%) 85px 5px / 3px 3px no-repeat,
    linear-gradient(to right, #fff 81px, #e4e4e4 81px);
  background:
    conic-gradient(from 315deg at 50% 100%, #888 90deg, transparent 90deg) 84px 5px / 6px 3px no-repeat,
    linear-gradient(to right, #fff 81px, #e4e4e4 81px);
  border: 1px solid #bbb;
}
.layeropts label {
  font-size: 9px;
}
.layeropts input {
  width: 31px;
  height: 15px;
  margin-left: auto;
}
.layeropts button {
  flex: none;
  width: 13px;
  height: 15px;
  font-size: 7px;
  color: #888;
  border: 1px solid #bbb;
}
.layeropts.locks {
  gap: 4px;
  height: 22px;
}
.locks .fill {
  margin-left: auto;
}
.locks input {
  margin: 0;
}
.locks button {
  margin-left: -4px;
}
.layerwrap {
  display: flex;
  flex: 1;
  min-height: 0;
}
.layerlist {
  flex: 1;
}
.layerwrap .scroll {
  width: 13px;
}
.layer {
  display: flex;
  height: 33px;
  border-bottom: 1px solid #999;
}
.vis {
  flex: none;
  width: 20px;
  border-right: 1px solid #999;
}
.layermain {
  display: flex;
  align-items: center;
  flex: 1;
  gap: 4px;
  padding-left: 2px;
}
.selected .layermain {
  color: #fff;
  background: #3394fb;
}
.selected .vthumb {
  outline: 1px dashed #fff;
}
.fx {
  margin-left: auto;
  font: italic bold 12px "Liberation Serif", serif;
  color: #124;
}
.selected .uptri {
  margin: 0 1px;
  border-bottom-color: #124;
}
.effects {
  margin-left: 19px;
  border-left: 1px solid #999;
}
.layer.selected {
  border: 0;
  height: 30px;
}
.fxrow {
  display: flex;
  align-items: center;
  gap: 3px;
  height: 15px;
  margin-left: 28px;
  border-bottom: 1px solid #999;
}
.fxrow.top {
  margin-left: 14px;
}
.fxrow.last {
  margin-left: 0;
  padding-left: 28px;
}
.bgthumb {
  width: 19px;
  height: 26px;
  background: #fff;
  border: 1px solid #222;
}
.bgname {
  margin-left: 4px;
}
.lock {
  margin: 0 11px 0 auto;
}

/* layer style dialog */
.dialog {
  position: absolute;
  left: 191px;
  top: 189px;
  width: 458px;
  padding: 0 5px 5px;
  border: 1px solid #8a929c;
  border-radius: 6px;
  background: linear-gradient(to right, #fafafa 86%, #c4dcf4 96%);
  box-shadow: 1px 1px 3px #888;
}
.dlgtitle {
  display: flex;
  justify-content: space-between;
  height: 22px;
}
.dlgtitle span {
  line-height: 20px;
}
.dlgtitle button {
  display: flex;
  align-items: center;
  justify-content: center;
  width: 37px;
  height: 15px;
  border: 1px solid #9ab;
  border-top: 0;
  border-radius: 0 0 4px 4px;
}
.dlgbody {
  display: flex;
  align-items: flex-start;
  height: 366px;
  padding: 11px 7px 0 8px;
  border: 1px solid #999;
  background: #eee;
}
.stylelist {
  width: 79px;
  height: 346px;
  margin-right: 12px;
  border: 1px solid #222;
}
.listhead {
  height: 18px;
  padding-left: 4px;
  line-height: 16px;
  border-bottom: 3px double #222;
}
.listblend {
  height: 17px;
  padding-left: 3px;
  line-height: 17px;
  white-space: nowrap;
  border-bottom: 1px solid #222;
}
.stylelist label {
  display: flex;
  align-items: center;
  gap: 2px;
  height: 17px;
  padding-left: 4px;
  border-bottom: 1px solid #fff;
}
.stylelist label.current {
  height: 18px;
  color: #fff;
  background: #3394fb;
  border-bottom: 0;
}
.stylelist label.child {
  margin-left: 11px;
  padding-left: 4px;
  color: #fff;
  background: #87bbef;
}
input[type=checkbox] {
  appearance: none;
  flex: none;
  width: 9px;
  height: 9px;
  font-size: 9px;
  line-height: 7px;
  color: #224;
  background: #f4f4f4;
  border: 1px solid #999;
}
input[type=checkbox]:checked::after {
  content: "✓";
  display: block;
  font-weight: bold;
}
input[type=radio] {
  appearance: none;
  width: 10px;
  height: 10px;
  background: #f4f4f4;
  border: 1px solid #999;
  border-radius: 50%;
}
input[type=radio]:checked {
  background: radial-gradient(circle, #258 45%, #f4f4f4 55%);
}
.bevel {
  display: flow-root;
  width: 245px;
  height: 346px;
  padding: 0 4px 0 6px;
  background: linear-gradient(#aaa, #aaa) 0 1px / 100% 1px no-repeat;
  border: 1px solid #aaa;
  border-top: 0;
}
.legend {
  width: max-content;
  height: 12px;
  margin-left: 12px;
  padding: 0 4px;
  line-height: 12px;
  background: #eee;
}
.legend.outer {
  margin-left: 4px;
  margin-top: -4px;
}
.section {
  margin-top: 2px;
  background: linear-gradient(#aaa, #aaa) 0 6px / 100% 1px no-repeat;
  border-bottom: 1px solid #aaa;
}
.structure {
  height: 132px;
}
.shading {
  height: 172px;
}
.structure .legend {
  margin-bottom: 5px;
}
.row {
  position: relative;
  display: flex;
  align-items: center;
  height: 18px;
  white-space: nowrap;
}
.row > label:first-child, .row .lab {
  flex: none;
  width: 66px;
  margin-right: 4px;
  text-align: right;
}
.row.tall {
  height: 19px;
}
.dialog select {
  appearance: none;
  width: 57px;
  height: 17px;
  padding-left: 5px;
  background: #fff;
  border: 1px solid #ddd;
}
.row .swatch {
  margin-left: 4px;
}
/* arrow on the drop-downs */
.row:has(select)::after {
  content: "";
  position: absolute;
  left: 118px;
  border: 3px solid transparent;
  border-top: 4px solid #000;
  border-bottom: 0;
}
.row.blend::after {
  left: 156px;
}
.row.blend select {
  width: 94px;
}
.row .num {
  width: 29px;
  margin: 0 2px 0 8px;
}
.num {
  height: 14px;
  padding-left: 3px;
  background: #fff;
  border: 1px solid #ddd;
}
.radios label:not(:first-child) {
  display: flex;
  align-items: center;
  gap: 3px;
  margin-right: 10px;
}
.angle {
  display: flex;
  height: 45px;
  margin-top: 7px;
  white-space: nowrap;
}
.anglelabels {
  display: flex;
  flex-direction: column;
  justify-content: space-between;
  width: 66px;
  margin-right: 3px;
  text-align: right;
}
.angle svg {
  margin: 8px 5px 0 0;
}
.anglevals {
  display: flex;
  flex-direction: column;
  justify-content: space-between;
}
.anglevals div, .anglevals label, .check {
  display: flex;
  align-items: center;
  gap: 2px;
}
.anglevals .num {
  width: 32px;
  margin-right: 1px;
}
.row.contour {
  height: 31px;
}
.contour .check {
  margin-left: 10px;
}
.swatch {
  width: 25px;
  height: 14px;
  background: #fff;
  border: 1px solid #999;
}
.swatch.black {
  background: #1a1a1a;
}
.defaults {
  display: flex;
  gap: 8px;
  justify-content: center;
  margin-top: 5px;
  padding-right: 2px;
}
.btn {
  height: 16px;
  line-height: 14px;
  background: linear-gradient(#f4f4f4 45%, #ddd 50%, #ccc);
  border: 1px solid #888;
  border-radius: 2px;
}
.defaults .btn {
  width: 71px;
}
.actions {
  display: flex;
  flex-direction: column;
  align-items: center;
  gap: 6px;
  width: 80px;
  margin-left: auto;
}
.actions .btn {
  width: 80px;
}
.actions .primary {
  border: 2px solid #4ab0dc;
  line-height: 12px;
}
.actions .check {
  height: 12px;
  margin-top: -1px;
}
.preview {
  display: flex;
  align-items: center;
  justify-content: center;
  width: 51px;
  height: 51px;
  margin-top: -2px;
  background: #dcdcdc;
  border: 1px solid #ccc;
}

/* red call-outs over the window */
.mark {
  position: absolute;
  border: 3px solid #e60f0f;
}
.mark-list {
  left: 188px;
  top: 318px;
  width: 106px;
  height: 35px;
}
.mark-form {
  left: 303px;
  top: 218px;
  width: 233px;
  height: 351px;
}
```
